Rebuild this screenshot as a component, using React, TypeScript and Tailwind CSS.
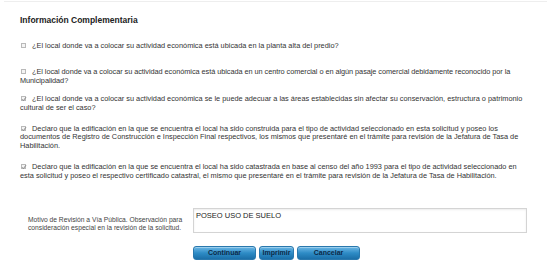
import React from "react";

function Box({ checked }: { checked: boolean }) {
  return (
    <span className="inline-block relative w-[5px] h-[5px] border border-[#b9b9b9] bg-[#f4f4f4] mr-[6px] ml-[1px] align-[0px]">
      {checked && (
        <svg viewBox="0 0 6 6" className="absolute left-[-1px] top-[-1px] w-[6px] h-[6px]">
          <path d="M1 3.2 L2.4 4.6 L5 1.2" stroke="#8a8a8a" strokeWidth="1" fill="none" />
        </svg>
      )}
    </span>
  );
}

const rows: { checked: boolean; lines: string[]; mt: string; cls: string }[] = [
  { checked: false, mt: "mt-[17px]", cls: "", lines: ["¿El local donde va a colocar su actividad económica está ubicada en la planta alta del predio?"] },
  { checked: false, mt: "mt-[18px]", cls: "tracking-[-0.06px]", lines: ["¿El local donde va a colocar su actividad económica está ubicada en un centro comercial o en algún pasaje comercial debidamente reconocido por la", "Municipalidad?"] },
  { checked: true, mt: "mt-[10px]", cls: "", lines: ["¿El local donde va a colocar su actividad económica se le puede adecuar a las áreas establecidas sin afectar su conservación, estructura o patrimonio", "cultural de ser el caso?"] },
  { checked: true, mt: "mt-[13px]", cls: "", lines: ["Declaro que la edificación en la que se encuentra el local ha sido construida para el tipo de actividad seleccionado en esta solicitud y poseo los", "documentos de Registro de Construcción e Inspección Final respectivos, los mismos que presentaré en el trámite para revisión de la Jefatura de Tasa de", "Habilitación."] },
  { checked: true, mt: "mt-[13px]", cls: "", lines: ["Declaro que la edificación en la que se encuentra el local ha sido catastrada en base al censo del año 1993 para el tipo de actividad seleccionado en", "esta solicitud y poseo el respectivo certificado catastral, el mismo que presentaré en el trámite para revisión de la Jefatura de Tasa de Habilitación."] },
];

function Btn({ label, w }: { label: string; w: string }) {
  return (
    <button
      className={`${w} h-[14px] rounded-[3px] border border-[#2a78ad] bg-gradient-to-b from-[#6bb8e6] via-[#2e8cc6] to-[#1b6fa8] text-[7px] font-bold text-[#0c2a48] leading-[12px] shadow-[inset_0_1px_0_rgba(255,255,255,0.35)]`}
    >
      {label}
    </button>
  );
}

export default function App() {
  return (
    <div className="w-[551px] h-[277px] bg-white font-['Liberation_Sans',Arial,sans-serif] text-[#333] overflow-hidden">
      <div className="mx-[4px] mt-[1px] border-t border-[#eeeeee]" />
      <div className="pl-[20px] pr-[12px]">
        <h1 className="mt-[13px] text-[8.5px] font-bold text-[#222] leading-[10px]">Información Complementaria</h1>
        {rows.map((r, i) => (
          <p key={i} className={`${r.mt} ${r.cls} text-[7.35px] leading-[8.4px] whitespace-nowrap`}>
            <Box checked={r.checked} />
            {r.lines.map((l, j) => (
              <React.Fragment key={j}>
                {j > 0 && <br />}
                {l}
              </React.Fragment>
            ))}
          </p>
        ))}
        <div className="mt-[28px] flex items-start">
          <div className="w-[173px] pl-[8px] pt-[8px] text-[6.7px] leading-[7.5px] text-[#444]">
            Motivo de Revisión a Vía Pública. Observación para consideración especial en la revisión de la solicitud.
          </div>
          <div className="w-[334px] h-[25px] border border-[#d4d4d4] shadow-[inset_0_1px_2px_rgba(0,0,0,0.08)] px-[2px] pt-[2px] text-[7.5px] leading-[9px] text-[#222]">
            POSEO USO DE SUELO
          </div>
        </div>
        <div className="mt-[13px] ml-[173px] flex gap-[3px]">
          <Btn label="Continuar" w="w-[63px]" />
          <Btn label="Imprimir" w="w-[35px]" />
          <Btn label="Cancelar" w="w-[63px]" />
        </div>
      </div>
    </div>
  );
}
